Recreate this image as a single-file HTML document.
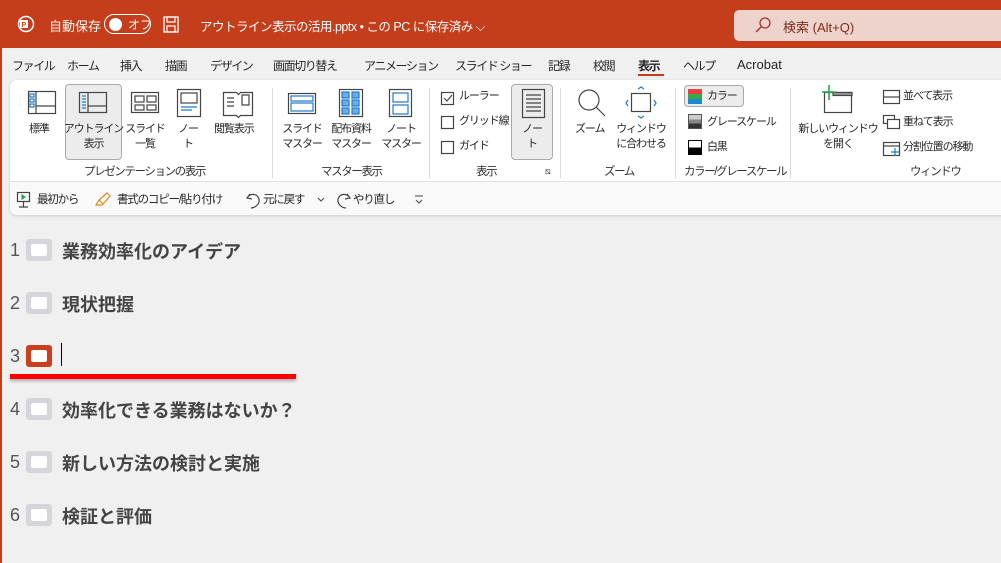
<!DOCTYPE html>
<html><head><meta charset="utf-8"><style>
*{margin:0;padding:0;box-sizing:border-box}
body{width:1001px;height:563px;overflow:hidden;background:#f0f0f0;font-family:"Liberation Sans","Noto Sans CJK JP",sans-serif;position:relative;color:#262626}
.a{position:absolute;white-space:nowrap}
#title{left:0;top:0;width:1001px;height:48px;background:#c43e1c;color:#fff;font-size:13px}
.tab{top:57px;font-size:12px;color:#262626;letter-spacing:-1.4px}
#rib{left:10px;top:80px;width:1000px;height:135px;background:#fff;border-radius:7px 0 0 7px;box-shadow:0 1px 3px rgba(0,0,0,.15)}
.lbl{font-size:11px;color:#262626;text-align:center;line-height:15px;letter-spacing:-1.1px}
.glbl{top:163px;font-size:11.5px;color:#333;letter-spacing:-1.4px}
.sep{top:88px;width:1px;height:90px;background:#dadada}
.sel{background:#ececec;border:1px solid #a9a9a9;border-radius:4px}
.num{left:10px;font-size:18px;color:#555;font-family:"Liberation Sans",sans-serif}
.th{left:26px;width:26px;height:22px;background:#d4d6d9;border-radius:3px}
.th::after{content:"";position:absolute;left:5px;top:5px;width:16px;height:12px;background:#fff;border-radius:2px}
.tx{left:62px;font-size:18px;font-weight:bold;color:#444}
.q{top:191px;font-size:11.5px;color:#262626;letter-spacing:-1.2px}
</style></head><body>
<div style="position:absolute;left:0;top:48px;width:2px;height:515px;background:#c43e1c"></div>
<div id="title" class="a">
 <svg class="a" style="left:17px;top:15px" width="18" height="18" viewBox="0 0 18 18"><circle cx="9" cy="9" r="7.5" fill="none" stroke="#fff" stroke-width="1.5"/><rect x="3" y="5" width="8" height="8" fill="#fff"/><text x="4.5" y="12" font-size="7" fill="#c43e1c" font-weight="bold">P</text></svg>
 <div class="a" style="left:49px;top:16px">自動保存</div>
 <div class="a" style="left:104px;top:14px;width:47px;height:20px;border:1.5px solid #fff;border-radius:10px"></div>
 <div class="a" style="left:109px;top:18px;width:13px;height:13px;border-radius:50%;background:#fff"></div>
 <div class="a" style="left:128px;top:16px;font-size:12px">オフ</div>
 <svg class="a" style="left:163px;top:16px" width="16" height="17"><rect x="1" y="1" width="14" height="15" fill="none" stroke="#fff" stroke-width="1.3"/><rect x="4" y="1" width="8" height="5" fill="none" stroke="#fff" stroke-width="1.2"/><rect x="4" y="10" width="8" height="6" fill="none" stroke="#fff" stroke-width="1.2"/></svg>
 <div class="a" style="left:200px;top:16px;font-size:12.5px;letter-spacing:-0.5px">アウトライン表示の活用.pptx • この PC に保存済み ⌵</div>
 <div class="a" style="left:734px;top:10px;width:280px;height:31px;background:#edd3cb;border-radius:5px"></div>
 <svg class="a" style="left:754px;top:16px" width="18" height="18"><circle cx="11" cy="7" r="5" fill="none" stroke="#a33" stroke-width="1.3"/><line x1="7.5" y1="10.5" x2="2" y2="16" stroke="#a33" stroke-width="1.4"/></svg>
 <div class="a" style="left:783px;top:17px;color:#7a2e1c;font-size:13px">検索 (Alt+Q)</div>
</div>
<div class="a tab" style="left:12px">ファイル</div>
<div class="a tab" style="left:67px">ホーム</div>
<div class="a tab" style="left:120px">挿入</div>
<div class="a tab" style="left:165px">描画</div>
<div class="a tab" style="left:210px">デザイン</div>
<div class="a tab" style="left:273px">画面切り替え</div>
<div class="a tab" style="left:364px">アニメーション</div>
<div class="a tab" style="left:455px">スライド ショー</div>
<div class="a tab" style="left:548px">記録</div>
<div class="a tab" style="left:593px">校閲</div>
<div class="a tab" style="left:638px;font-weight:bold">表示</div>
<div class="a" style="left:638px;top:74px;width:26px;height:2px;background:#c43e1c"></div>
<div class="a tab" style="left:683px">ヘルプ</div>
<div class="a tab" style="left:737px;letter-spacing:0;font-size:13px">Acrobat</div>

<div id="rib" class="a"></div>
<div class="a sel" style="left:65px;top:84px;width:57px;height:76px"></div>
<div class="a sel" style="left:511px;top:84px;width:42px;height:76px"></div>

<svg class="a" style="left:0;top:80px" width="1001" height="90" fill="none" stroke="#444" stroke-width="1.2">
 <rect x="28.5" y="11.5" width="27" height="22"/><line x1="36" y1="12" x2="36" y2="33"/><line x1="36" y1="26" x2="55" y2="26"/><rect x="30" y="14" width="4" height="3" stroke="#1e7ac8"/><rect x="30" y="19" width="4" height="3" stroke="#1e7ac8"/><rect x="30" y="24" width="4" height="3" stroke="#1e7ac8"/>
 <rect x="79.5" y="12.5" width="27" height="20"/><line x1="88" y1="12" x2="88" y2="33"/><line x1="88" y1="26" x2="106" y2="26"/><path d="M82 16h4M82 19h4M82 22h4M82 25h4M82 28h4" stroke="#1e7ac8"/>
 <rect x="131.5" y="12.5" width="27" height="20"/><rect x="135" y="16" width="9" height="6"/><rect x="147" y="16" width="9" height="6"/><rect x="135" y="25" width="9" height="5"/><rect x="147" y="25" width="9" height="5"/>
 <rect x="177.5" y="9.5" width="23" height="27"/><rect x="181" y="13" width="16" height="10"/><path d="M181 27h16M181 30h11" stroke="#1e7ac8"/>
 <path d="M223.5 12.5h13l2 2 2-2h12v23h-12l-2 2-2-2h-13z"/><path d="M227 18h7M227 22h7M227 26h7M242 15h7v10h-7z"/>
 <rect x="288.5" y="13.5" width="27" height="20"/><rect x="291" y="16" width="22" height="5" stroke="#1e7ac8"/><rect x="291" y="23" width="22" height="8" stroke="#1e7ac8"/>
 <rect x="339.5" y="9.5" width="23" height="27"/><g fill="#6aaee8" stroke="#1e7ac8"><rect x="342" y="12" width="7" height="6"/><rect x="352" y="12" width="7" height="6"/><rect x="342" y="20" width="7" height="6"/><rect x="352" y="20" width="7" height="6"/><rect x="342" y="28" width="7" height="6"/><rect x="352" y="28" width="7" height="6"/></g>
 <rect x="389.5" y="9.5" width="22" height="27"/><rect x="393" y="13" width="15" height="9" stroke="#1e7ac8"/><rect x="393" y="25" width="15" height="9" stroke="#1e7ac8"/>
 <rect x="441.5" y="12.5" width="12" height="12"/><path d="M444 18l3 3 5-6"/>
 <rect x="441.5" y="36.5" width="12" height="12"/><rect x="441.5" y="61.5" width="12" height="12"/>
 <rect x="522.5" y="9.5" width="22" height="28"/><path d="M526 15h15M526 19h15M526 23h15M526 27h15M526 31h15"/>
 <circle cx="589" cy="20" r="10"/><line x1="596" y1="27" x2="605" y2="36"/>
 <rect x="631.5" y="13.5" width="19" height="18"/><path d="M638 9l3-2 3 2M638 36l3 2 3-2M628 20l-2 3 2 3M654 20l2 3-2 3" stroke="#1e7ac8"/>
 <rect x="824.5" y="12.5" width="27" height="20"/><rect x="833" y="12.5" width="19" height="3" fill="#999"/><path d="M829 5v15M822 12h14" stroke="#2aa34a" stroke-width="1.6"/>
 <rect x="883.5" y="10.5" width="16" height="13"/><line x1="884" y1="17" x2="900" y2="17"/>
 <rect x="883.5" y="35.5" width="11" height="8"/><rect x="887.5" y="39.5" width="12" height="9" fill="#fff"/>
 <rect x="883.5" y="62.5" width="16" height="13"/><line x1="884" y1="66" x2="900" y2="66"/><path d="M895 68v8M891 72h8" stroke="#1e7ac8"/>
</svg>
<div class="a sel" style="left:684px;top:85px;width:60px;height:22px"></div>
<div class="a" style="left:688px;top:89px;width:14px;height:5px;background:#e84040"></div>
<div class="a" style="left:688px;top:94px;width:14px;height:5px;background:#3aa64a"></div>
<div class="a" style="left:688px;top:99px;width:14px;height:5px;background:#1e88d0"></div>
<div class="a" style="left:688px;top:114px;width:14px;height:15px;background:linear-gradient(#ccc 0 33%,#888 33% 66%,#333 66%);border:1px solid #555"></div>
<div class="a" style="left:688px;top:140px;width:14px;height:15px;background:linear-gradient(#fff 0 50%,#000 50%);border:1px solid #000"></div>

<div class="a lbl" style="left:29px;top:122px">標準</div>
<div class="a lbl" style="left:63px;top:122px;width:61px">アウトライン<br>表示</div>
<div class="a lbl" style="left:125px;top:122px;width:40px">スライド<br>一覧</div>
<div class="a lbl" style="left:175px;top:122px;width:26px">ノー<br>ト</div>
<div class="a lbl" style="left:214px;top:122px">閲覧表示</div>
<div class="a lbl" style="left:280px;top:122px;width:44px">スライド<br>マスター</div>
<div class="a lbl" style="left:326px;top:122px;width:50px">配布資料<br>マスター</div>
<div class="a lbl" style="left:379px;top:122px;width:44px">ノート<br>マスター</div>
<div class="a lbl" style="left:459px;top:89px">ルーラー</div>
<div class="a lbl" style="left:459px;top:114px">グリッド線</div>
<div class="a lbl" style="left:459px;top:139px">ガイド</div>
<div class="a lbl" style="left:512px;top:122px;width:40px">ノー<br>ト</div>
<div class="a lbl" style="left:575px;top:122px">ズーム</div>
<div class="a lbl" style="left:612px;top:122px;width:58px">ウィンドウ<br>に合わせる</div>
<div class="a lbl" style="left:707px;top:89px">カラー</div>
<div class="a lbl" style="left:707px;top:115px">グレースケール</div>
<div class="a lbl" style="left:707px;top:140px">白黒</div>
<div class="a lbl" style="left:796px;top:122px;width:84px">新しいウィンドウ<br>を開く</div>
<div class="a lbl" style="left:903px;top:89px">並べて表示</div>
<div class="a lbl" style="left:903px;top:115px">重ねて表示</div>
<div class="a lbl" style="left:903px;top:140px">分割位置の移動</div>

<div class="a glbl" style="left:84px">プレゼンテーションの表示</div>
<div class="a glbl" style="left:321px">マスター表示</div>
<div class="a glbl" style="left:476px">表示</div>
<div class="a glbl" style="left:545px;font-size:9px;top:166px">⧅</div>
<div class="a glbl" style="left:604px">ズーム</div>
<div class="a glbl" style="left:684px">カラー/グレースケール</div>
<div class="a glbl" style="left:910px">ウィンドウ</div>
<div class="a sep" style="left:272px"></div><div class="a sep" style="left:429px"></div><div class="a sep" style="left:560px"></div><div class="a sep" style="left:675px"></div><div class="a sep" style="left:790px"></div>
<div class="a" style="left:10px;top:181px;width:991px;height:1px;background:#e1e1e1"></div>
<div class="a" style="left:10px;top:182px;width:991px;height:33px;background:#f9f9f9;border-radius:0 0 0 7px"></div>

<svg class="a" style="left:14px;top:190px" width="420" height="20" fill="none" stroke="#444" stroke-width="1.2">
 <rect x="3.5" y="2.5" width="12" height="9"/><path d="M9.5 12v5M5 17h9"/><path d="M8 5l3 2-3 2z" fill="#2aa34a" stroke="#2aa34a"/>
 <path d="M85 10l8-7 3 3-7 8z" stroke="#e08a20"/><path d="M85 10l-3 5 6 0 1-1" stroke="#e08a20"/>
 <path d="M236 4l-3 4 5 1M233 8c3-5 10-5 12 1 1 5-4 9-8 9" />
 <path d="M304 8l3 3 3-3" stroke-width="1"/>
 <path d="M333 4l3 4-5 1M336 8c-3-5-10-5-12 1-1 5 4 9 8 9"/>
 <path d="M401 6h8M402 10l3 3 3-3" stroke-width="1"/>
</svg>
<div class="a q" style="left:37px">最初から</div>
<div class="a q" style="left:117px">書式のコピー/貼り付け</div>
<div class="a q" style="left:263px">元に戻す</div>
<div class="a q" style="left:353px">やり直し</div>

<div class="a num" style="top:240px">1</div><div class="a th" style="top:239px"></div><div class="a tx" style="top:238px">業務効率化のアイデア</div>
<div class="a num" style="top:293px">2</div><div class="a th" style="top:292px"></div><div class="a tx" style="top:291px">現状把握</div>
<div class="a num" style="top:346px">3</div><div class="a th" style="top:345px;background:#c8401e"></div><div class="a" style="left:61px;top:343px;width:1px;height:23px;background:#000"></div>
<div class="a" style="left:10px;top:374px;width:286px;height:5px;background:#f00;box-shadow:0 2px 3px rgba(0,0,0,.3)"></div>
<div class="a num" style="top:399px">4</div><div class="a th" style="top:398px"></div><div class="a tx" style="top:397px">効率化できる業務はないか？</div>
<div class="a num" style="top:452px">5</div><div class="a th" style="top:451px"></div><div class="a tx" style="top:450px">新しい方法の検討と実施</div>
<div class="a num" style="top:505px">6</div><div class="a th" style="top:504px"></div><div class="a tx" style="top:503px">検証と評価</div>
</body></html>
